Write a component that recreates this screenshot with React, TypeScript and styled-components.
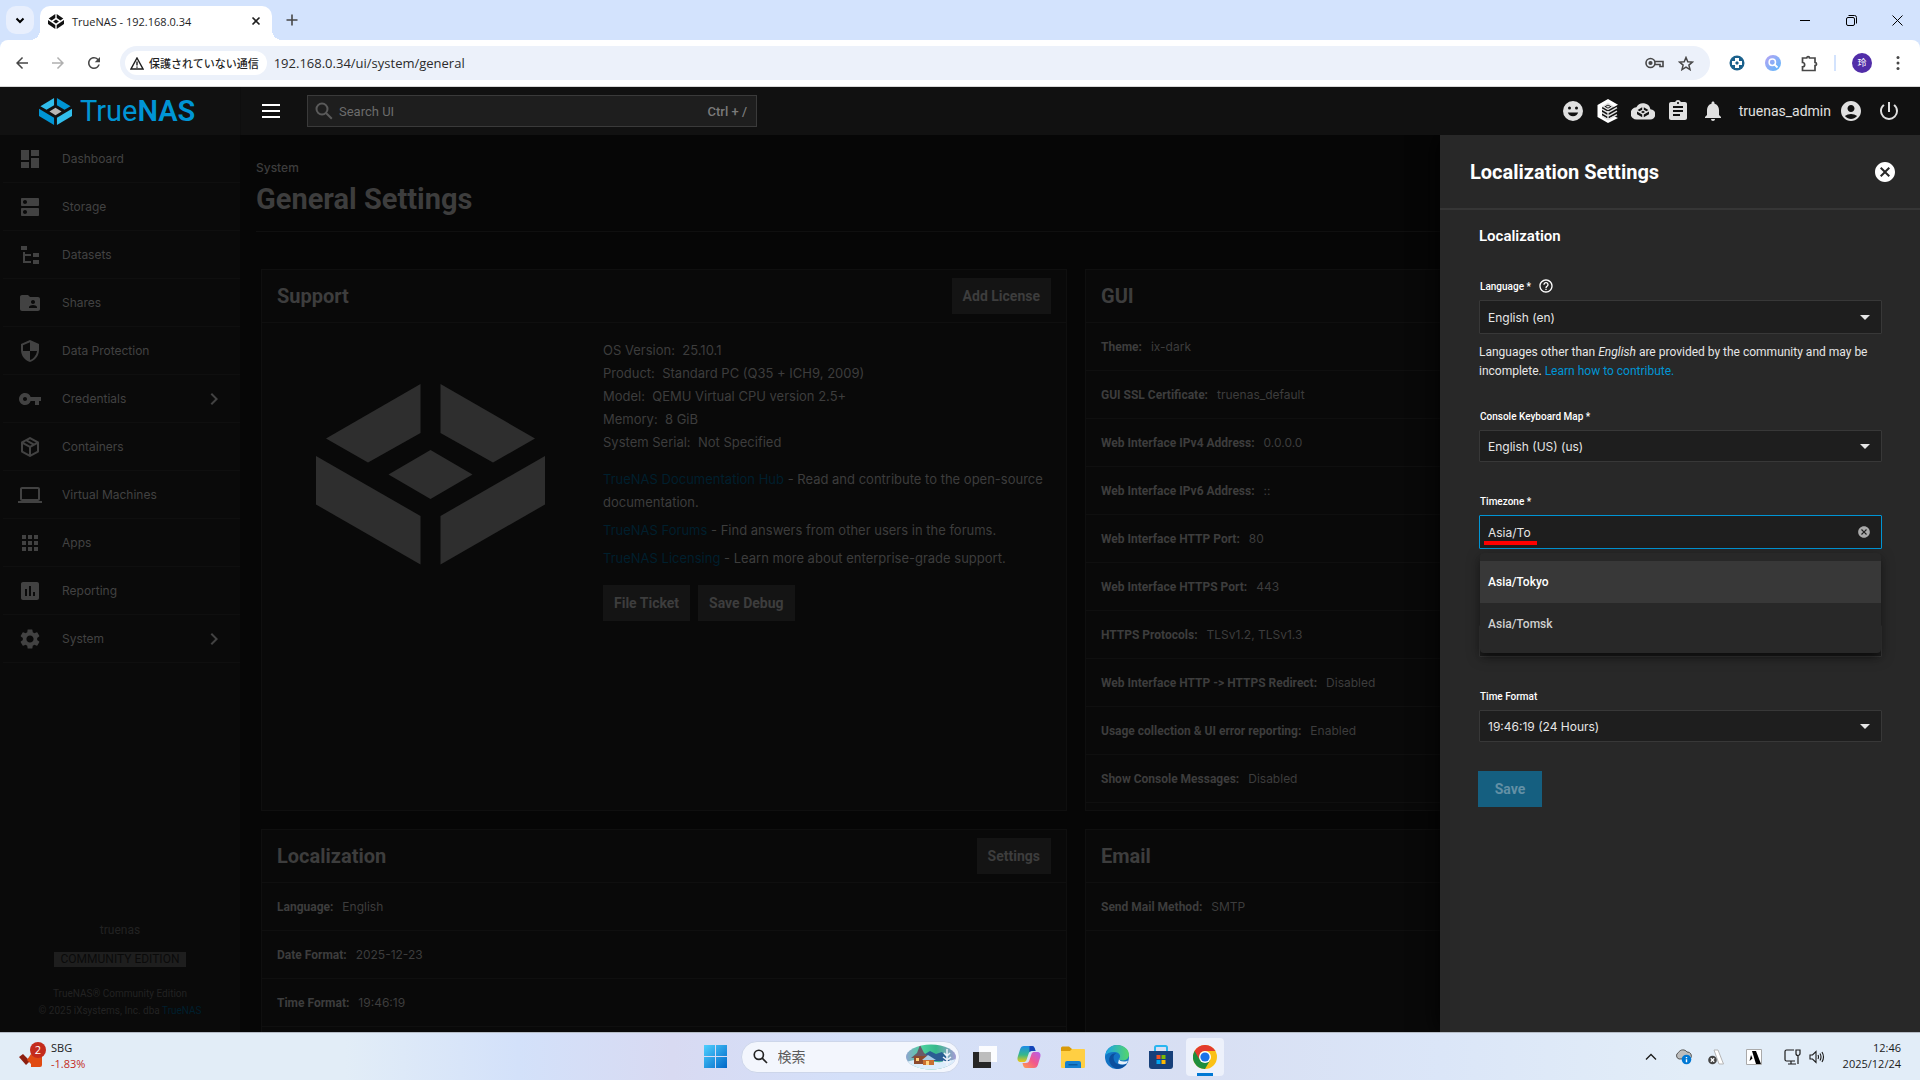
import React from "react";
import styled, { createGlobalStyle, css } from "styled-components";
import {
  MdAccountCircle,
  MdApps,
  MdArrowBack,
  MdArrowDropDown,
  MdArrowForward,
  MdAssessment,
  MdAssignment,
  MdCancel,
  MdChevronRight,
  MdDashboard,
  MdDns,
  MdFolderShared,
  MdHelpOutline,
  MdLaptop,
  MdNotifications,
  MdPowerSettingsNew,
  MdRefresh,
  MdSecurity,
  MdSettings,
  MdVpnKey,
} from "react-icons/md";

const fonts = {
  ui: `Inter, Roboto, "Liberation Sans", sans-serif`,
  plain: `Roboto, "Liberation Sans", sans-serif`,
  system: `"Open Sans", "Noto Sans", "Noto Sans CJK JP", sans-serif`,
};

const colors = {
  blue: "#0095d5",
  bar: "#111111",
  icon: "#e0e0e0",
  side: "#0a0a0a",
  main: "#060606",
  card: "#090909",
  line: "#0f0f0f",
  dim: "#3d3d3d",
  panel: "#282828",
  field: "#1e1e1e",
  fieldLine: "#383838",
};

const GlobalStyle = createGlobalStyle`
  *, *::before, *::after { box-sizing: border-box; }
  body { margin: 0; background: ${colors.main}; font-family: ${fonts.ui}; }
  button, input, select { font: inherit; color: inherit; margin: 0; }
  button { border: 0; padding: 0; background: none; cursor: pointer; }
  h1, h2, h3, p, ul, dl, dd { margin: 0; padding: 0; }
  ul { list-style: none; }
  a { color: inherit; text-decoration: none; }
  svg { display: block; flex: none; }
`;

const Screen = styled.div`
  display: flex;
  flex-direction: column;
  height: 100vh;
  overflow: hidden;
`;

/* ---------- browser ---------- */

const TabStrip = styled.div`
  display: flex;
  align-items: center;
  height: 40px;
  flex: none;
  padding-left: 6px;
  background: #d3e3fd;
  font-family: ${fonts.system};
`;

const TabSearch = styled.button`
  display: grid;
  place-items: center;
  width: 28px;
  height: 28px;
  border-radius: 10px;
  background: #e8effd;
`;

const Tab = styled.div`
  position: relative;
  display: flex;
  align-items: center;
  align-self: flex-end;
  gap: 8px;
  width: 232px;
  height: 34px;
  margin-left: 6px;
  padding: 0 11px 4px 8px;
  border-radius: 10px 10px 0 0;
  background: #fff;
  color: #1f1f1f;

  &::before,
  &::after {
    content: "";
    position: absolute;
    bottom: 0;
    width: 10px;
    height: 10px;
  }
  &::before {
    right: 100%;
    background: radial-gradient(circle at 0 0, transparent 10px, #fff 10px);
  }
  &::after {
    left: 100%;
    background: radial-gradient(circle at 100% 0, transparent 10px, #fff 10px);
  }
`;

const TabTitle = styled.span`
  flex: 1;
  font-size: 11px;
  white-space: nowrap;
`;

const NewTab = styled.button`
  margin-left: 14px;
`;

const WindowButtons = styled.div`
  display: flex;
  margin-left: auto;
`;

const WindowButton = styled.button`
  display: grid;
  place-items: center;
  width: 46px;
  height: 40px;
`;

const Toolbar = styled.div`
  display: flex;
  align-items: center;
  flex: none;
  height: 47px;
  padding: 0 16px 0 12px;
  background: #fff;
  border-bottom: 1px solid #d8d8d8;
  border-radius: 8px 8px 0 0;
  font-family: ${fonts.system};
  color: #474747;
`;

const ToolbarBack = styled.div`
  flex: none;
  background: linear-gradient(#d3e3fd 50%, #fff 50%);
`;

const NavButton = styled.button<{ $muted?: boolean }>`
  display: grid;
  place-items: center;
  width: 20px;
  height: 32px;
  margin-right: 16px;
  color: ${(p) => (p.$muted ? "#b0b0b0" : "#474747")};
`;

const Omnibox = styled.div`
  display: flex;
  align-items: center;
  flex: 1;
  height: 34px;
  padding: 0 16px 0 5px;
  border-radius: 17px;
  background: #ecf1fa;
`;

const SecurityChip = styled.button`
  display: flex;
  align-items: center;
  gap: 5px;
  height: 24px;
  padding: 0 8px 0 5px;
  border-radius: 12px;
  background: #fff;
  color: #1f1f1f;
  font-size: 11px;
  font-weight: 500;
  font-family: "Noto Sans CJK JP", sans-serif;
  line-height: 24px;
`;

const Address = styled.input`
  flex: 1;
  min-width: 0;
  margin-left: 7px;
  padding: 0;
  border: 0;
  outline: 0;
  background: none;
  color: #2b2b2b;
  font-size: 13px;
`;

const OmniActions = styled.div`
  display: flex;
  align-items: center;
  gap: 14px;
`;

const Extensions = styled.div`
  display: flex;
  align-items: center;
  gap: 20px;
  margin-left: 19px;
`;

const Divider = styled.span`
  width: 2px;
  height: 16px;
  margin: 0 -4px;
  background: #d3e3fd;
`;

const Avatar = styled.button`
  width: 20px;
  height: 20px;
  border-radius: 50%;
  background: #512da8;
  color: #fff;
  font-size: 9px;
  line-height: 20px;
  font-family: "Noto Sans CJK JP", sans-serif;
`;

/* ---------- application header ---------- */

const AppBar = styled.header`
  display: flex;
  align-items: center;
  flex: none;
  height: 48px;
  background: ${colors.bar};
  color: ${colors.icon};
`;

const Brand = styled.a`
  display: flex;
  align-items: center;
  gap: 8px;
  width: 241px;
  height: 100%;
  padding-left: 39px;
  border-right: 1px solid #0e0e0e;
  color: ${colors.blue};
  font-family: ${fonts.plain};
  font-size: 29px;
  line-height: 48px;
`;

const BrandBold = styled.b`
  font-weight: 600;
`;

const MenuButton = styled.button`
  display: grid;
  gap: 4px;
  width: 18px;
  margin-left: 21px;

  span {
    height: 2px;
    background: #fff;
  }
`;

const SearchBox = styled.label`
  display: flex;
  align-items: center;
  gap: 6px;
  width: 450px;
  height: 32px;
  margin-left: 27px;
  padding: 0 9px 0 7px;
  border: 1px solid #3a3a3a;
  background: #1e1e1e;
  color: #7a7a7a;
  font-family: ${fonts.plain};
  font-size: 13px;

  input {
    flex: 1;
    min-width: 0;
    padding: 0;
    border: 0;
    outline: 0;
    background: none;
  }
  input::placeholder {
    color: #6c6c6c;
  }
  kbd {
    font: 500 13px ${fonts.plain};
  }
`;

const HeaderActions = styled.div`
  display: flex;
  align-items: center;
  gap: 11px;
  margin-left: auto;
  padding-right: 19px;
  font-family: ${fonts.plain};
`;

const IconButton = styled.button`
  display: grid;
  place-items: center;
  width: 24px;
  height: 24px;
`;

const UserButton = styled.button`
  display: flex;
  align-items: center;
  gap: 8px;
  margin: 0 3px;
  font-size: 14px;
`;

/* ---------- body ---------- */

const Body = styled.div`
  position: relative;
  display: flex;
  flex: 1;
  min-height: 0;
  overflow: hidden;
`;

const Sidebar = styled.nav`
  display: flex;
  flex-direction: column;
  flex: none;
  width: 240px;
  background: ${colors.side};
  color: #424242;
`;

const NavItem = styled.a`
  display: flex;
  align-items: center;
  height: 48px;
  margin-left: 3px;
  padding: 0 14px 0 15px;
  border-bottom: 1px solid #0f0f0f;
  font-size: 12px;

  > svg:first-child {
    width: 24px;
    height: 24px;
    margin-right: 20px;
  }
  span {
    flex: 1;
  }
`;

const SideFooter = styled.div`
  display: flex;
  flex-direction: column;
  align-items: center;
  margin-top: auto;
  padding-bottom: 13px;
  color: #222;
  font-family: ${fonts.plain};
  font-size: 10px;
  line-height: 17px;
`;

const HostName = styled.p`
  margin-bottom: 14px;
  font-size: 12px;
  line-height: 16px;
`;

const Edition = styled.span`
  margin-bottom: 18px;
  padding: 0 7px;
  background: #1e1e1e;
  color: #0a0a0a;
  font-size: 12px;
  line-height: 15px;
`;

const DarkLink = styled.a`
  color: #001f2d;
`;

const Main = styled.main`
  flex: 1;
  min-width: 0;
  padding: 25px 16px 0;
  background: ${colors.main};
  color: ${colors.dim};
  overflow: hidden;
`;

const Crumb = styled.a`
  display: block;
  font-size: 12px;
  font-weight: 500;
  line-height: 16px;
`;

const PageTitle = styled.h1`
  padding: 3px 0 12px;
  border-bottom: 1px solid ${colors.line};
  font-family: ${fonts.plain};
  font-size: 29px;
  font-weight: 700;
  line-height: 40px;
`;

const Grid = styled.div`
  display: grid;
  grid-template-columns: 1fr 1fr;
  gap: 18px;
  padding: 37px 13px 0 5px;
`;

const Card = styled.section`
  min-height: 260px;
  padding-bottom: 7px;
  background: ${colors.card};
  border: 1px solid ${colors.line};
`;

const CardHeader = styled.header`
  display: flex;
  align-items: center;
  justify-content: space-between;
  height: 53px;
  padding: 0 15px;
  border-bottom: 1px solid ${colors.line};
`;

const CardTitle = styled.h2`
  font-family: ${fonts.plain};
  font-size: 20px;
  font-weight: 700;
`;

const DimButton = styled.button`
  height: 36px;
  padding: 0 11px;
  background: #141414;
  color: ${colors.dim};
  font-family: ${fonts.plain};
  font-size: 14px;
  font-weight: 700;
`;

const Item = styled.div`
  display: flex;
  align-items: center;
  gap: 9px;
  height: 48px;
  padding: 0 15px;
  border-bottom: 1px solid ${colors.line};
  font-size: 12px;
  line-height: 16px;

  dt {
    font-family: ${fonts.plain};
    font-weight: 700;
  }
`;

const SupportBody = styled.div`
  display: grid;
  grid-template-columns: 341px 1fr;
  padding: 16px 8px 0 0;
  font-family: ${fonts.ui};
  font-size: 13px;
  line-height: 23px;

  > svg {
    margin: 45px 0 0 54px;
  }
`;

const Links = styled.ul`
  display: grid;
  gap: 5px;
  padding: 14px 0 15px;
`;

const ButtonRow = styled.div`
  display: flex;
  gap: 8px;
`;

/* ---------- slide-in form ---------- */

const Drawer = styled.aside`
  position: absolute;
  top: 0;
  right: 0;
  bottom: 0;
  width: 480px;
  background: ${colors.panel};
  color: #fff;
  box-shadow: 0 0 24px #000;
`;

const DrawerHeader = styled.header`
  display: flex;
  align-items: center;
  justify-content: space-between;
  height: 75px;
  padding: 0 23px 0 30px;
  border-bottom: 2px solid #363636;
`;

const DrawerTitle = styled.h2`
  font-family: ${fonts.plain};
  font-size: 20px;
  font-weight: 700;
`;

const Form = styled.form`
  padding: 14px 38px 0 39px;
`;

const FormTitle = styled.h3`
  margin-bottom: 30px;
  font-family: ${fonts.plain};
  font-size: 15px;
  font-weight: 600;
  line-height: 24px;
`;

const Field = styled.div<{ $gap?: number }>`
  position: relative;
  margin-bottom: ${(p) => p.$gap ?? 31}px;
`;

const FieldLabel = styled.div`
  display: flex;
  align-items: center;
  gap: 7px;
  height: 16px;
  margin: 0 1px 6px;
  font-family: ${fonts.plain};
  font-size: 10px;
  font-weight: 500;
`;

const Control = styled.div<{ $active?: boolean; $tall?: boolean }>`
  display: grid;
  align-items: center;
  height: ${(p) => (p.$tall ? 34 : 32)}px;
  border: 1px solid ${(p) => (p.$active ? colors.blue : colors.fieldLine)};
  border-radius: 1px;
  background: ${colors.field};
  color: #e6e6e6;
  font-size: 12px;

  > * {
    grid-area: 1 / 1;
  }
  > svg {
    justify-self: end;
    margin-right: 4px;
    pointer-events: none;
  }
  > button {
    justify-self: end;
    margin-right: 10px;
    color: #aaa;
  }
`;

const fieldText = css`
  width: 100%;
  height: 100%;
  padding: 0 8px;
  border: 0;
  outline: 0;
  background: none;
  appearance: none;
`;

const Select = styled.select`
  ${fieldText}
`;

const TextInput = styled.input`
  ${fieldText}
`;

const Underline = styled.span`
  align-self: end;
  width: 53px;
  height: 4px;
  margin: 0 0 3px 4px;
  background: #f00;
`;

const Hint = styled.p`
  margin-top: 9px;
  color: #e6e6e6;
  font-family: ${fonts.plain};
  font-size: 12px;
  line-height: 19px;

  a {
    color: ${colors.blue};
  }
`;

const Options = styled.ul`
  position: absolute;
  z-index: 1;
  top: 60px;
  left: 1px;
  right: 1px;
  padding: 8px 0;
  border-radius: 4px;
  background: ${colors.panel};
  box-shadow: 0 5px 6px -2px rgba(0, 0, 0, 0.4), 0 4px 14px rgba(0, 0, 0, 0.35);
`;

const Option = styled.li<{ $active?: boolean }>`
  padding: 0 8px;
  background: ${(p) => (p.$active ? "#383838" : "transparent")};
  color: ${(p) => (p.$active ? "#fff" : "#d0d0d0")};
  font-family: ${fonts.plain};
  font-size: 12px;
  font-weight: 500;
  line-height: 42px;
`;

const Save = styled.button`
  width: 64px;
  height: 36px;
  margin-left: -1px;
  background: #155f80;
  color: #6390a5;
  font-family: ${fonts.plain};
  font-size: 14px;
  font-weight: 700;
`;

/* ---------- taskbar ---------- */

const Taskbar = styled.footer`
  display: grid;
  grid-template-columns: 1fr auto 1fr;
  align-items: center;
  flex: none;
  height: 48px;
  border-top: 1px solid #b5bcc6;
  background: linear-gradient(90deg, #e2edf7 0 18%, #d3e1fa 27%, #d8daf2 35%, #d4e0f9 44%, #d8dff3 62%, #dbe6f8 75%, #e2edf8 88%);
  color: #1b1b1b;
  font-family: ${fonts.system};
`;

const Stock = styled.button`
  display: flex;
  align-items: center;
  gap: 5px;
  justify-self: start;
  padding: 0 0 2px 19px;
  text-align: left;
  font-size: 11px;
  line-height: 16px;
`;

const Loss = styled.span`
  display: block;
  color: #c42b1c;
`;

const Pinned = styled.div`
  display: flex;
  align-items: center;
`;

const PinnedApp = styled.button<{ $active?: boolean }>`
  display: grid;
  place-items: center;
  width: 38px;
  height: 38px;
  margin: 0 3px;
  border-radius: 4px;
  ${(p) =>
    p.$active &&
    css`
      background: linear-gradient(#0078d4, #0078d4) center bottom / 16px 3px no-repeat #edf1fb;
    `}
`;

const TaskSearch = styled.label`
  display: flex;
  align-items: center;
  gap: 10px;
  width: 219px;
  height: 32px;
  margin: 0 3px;
  padding: 0 3px 0 11px;
  border: 1px solid #cdd6ea;
  border-radius: 16px;
  background: #f3f6fd;

  input {
    flex: 1;
    min-width: 0;
    padding: 0 0 2px;
    border: 0;
    outline: 0;
    background: none;
    font: 14px "Noto Sans CJK JP", sans-serif;
  }
  input::placeholder {
    color: #5c5c5c;
  }
`;

const Tray = styled.div`
  display: flex;
  align-items: center;
  justify-self: end;
  padding-right: 19px;
`;

const TrayIcon = styled.button<{ $space?: number }>`
  margin-right: ${(p) => p.$space ?? 16}px;
`;

const Clock = styled.time`
  padding-bottom: 2px;
  text-align: right;
  font-size: 11px;
  line-height: 16px;
`;

/* ---------- drawings ---------- */

const CUBE = [
  "M104.5 0V49L52 78.5 10 54.5z",
  "M124.5 0V49L177 78.5 219 54.5z",
  "M0 72 104.5 132V180.500L0 120.500z",
  "M229 72 124.5 132V180.500L229 120.500z",
  "M114.5 66 156.500 90.500 114.500 115 72.500 90.500z",
];

function Cube({ width, height, fills }: { width: number; height: number; fills: string[] }) {
  return (
    <svg width={width} height={height} viewBox="0 0 229 181" preserveAspectRatio="none" aria-hidden="true">
      {CUBE.map((d, i) => (
        <path key={d} d={d} fill={fills[i % fills.length]} />
      ))}
    </svg>
  );
}

const DatasetsIcon = () => (
  <svg viewBox="0 0 24 24" fill="currentColor">
    <path d="M3 3h6v4H3zM15 10h6v4h-6zM15 17h6v4h-6zM5 9h2v2h6v2H7v5h6v2H5z" />
  </svg>
);

const PackageIcon = () => (
  <svg viewBox="0 0 24 24" fill="currentColor">
    <path d="M21,16.5C21,16.88 20.79,17.21 20.47,17.38L12.57,21.82C12.41,21.94 12.21,22 12,22C11.79,22 11.59,21.94 11.43,21.82L3.53,17.38C3.21,17.21 3,16.88 3,16.5V7.5C3,7.12 3.21,6.79 3.53,6.62L11.43,2.18C11.59,2.06 11.79,2 12,2C12.21,2 12.41,2.06 12.57,2.18L20.47,6.62C20.79,6.79 21,7.12 21,7.5V16.5M12,4.15L10.11,5.22L16,8.61L17.96,7.5L12,4.15M6.04,7.5L12,10.85L13.96,9.75L8.08,6.35L6.04,7.5M5,15.91L11,19.29V12.58L5,9.21V15.91M19,15.91V9.21L13,12.58V19.29L19,15.91Z" />
  </svg>
);

const SmileIcon = () => (
  <svg width="24" height="24" viewBox="0 0 24 24" fill="currentColor" fillRule="evenodd">
    <path d="M12 2a10 10 0 1 0 0 20 10 10 0 0 0 0-20zM8.500 7.500a1.500 1.500 0 1 1 0 3 1.500 1.500 0 0 1 0-3zM15.500 7.500a1.500 1.500 0 1 1 0 3 1.500 1.500 0 0 1 0-3zM6.800 13.500h10.400a5.500 5.500 0 0 1-10.400 0z" />
  </svg>
);

const ConnectIcon = () => (
  <svg width="22" height="24" viewBox="0 0 22 24" aria-hidden="true">
    <path d="M11 0 21 5.800 16.500 8.300 11 5.200 5 8.600V16.500L11 20 16.500 17 21 19 11 24 .5 18V6z" fill="#fff" />
    <path d="M11 4.600 16 7.600 11 10.400 6 7.600z" fill="none" stroke="#e0e0e0" strokeWidth="1.300" />
    <path d="M11 6.500 13 7.600 11 8.800 9 7.600z" fill="#e0e0e0" />
    <path d="M5 10.200 11 13.700 20 8.700M5 13.700 11 17.200 20 12.200M5 17.200 11 20.700 20 15.700M11 12v9" fill="none" stroke="#e0e0e0" strokeWidth="1.400" />
  </svg>
);

const CloudIcon = () => (
  <svg width="24" height="17" viewBox="0 0 24 17" aria-hidden="true">
    <path d="M19.400 6.200A7.500 7.500 0 0 0 5.400 4.300 6 6 0 0 0 6 16.500h13a5 5 0 0 0 .4-10.300z" fill="#e0e0e0" />
    <path d="M11.200 4.200v2.500L8.500 8.200 6.600 7zM12.800 4.200v2.500l2.700 1.500L17.400 7zM6 8.500l5.200 3v2.800L6 11.200zM18 8.500l-5.200 3v2.800l5.200-3.100zM12 7.800l2 1.200-2 1.200L10 9z" fill="#111" />
  </svg>
);

const SearchGlyph = ({ size, color, width = 2 }: { size: number; color: string; width?: number }) => (
  <svg width={size} height={size} viewBox="0 0 18 18" fill="none" stroke={color} strokeWidth={width} aria-hidden="true">
    <circle cx="7" cy="7" r="5.500" />
    <path d="M11 11l5.800 5.800" />
  </svg>
);

const StockIcon = () => (
  <svg width="27" height="28" viewBox="0 0 27 28" aria-hidden="true">
    <path d="M0 15l4-3 5 5 5-5v4l-7 7z" fill="#8d1f10" />
    <path d="M12 12l11 2v9a2 2 0 0 1-2 2h-9v-3l-4-4z" fill="#e04a12" />
    <circle cx="19" cy="8" r="8" fill="#c42b1c" />
    <text x="19" y="12" fontSize="11" fontFamily="Open Sans, sans-serif" textAnchor="middle" fill="#fff">2</text>
  </svg>
);

const WindowsIcon = () => (
  <svg width="23" height="23" viewBox="0 0 23 23" aria-hidden="true">
    <defs>
      <linearGradient id="win" x1="0" y1="0" x2="1" y2="1">
        <stop offset="0" stopColor="#4fd0ff" />
        <stop offset="1" stopColor="#0067c8" />
      </linearGradient>
    </defs>
    <path d="M0 0h11v11H0zM12 0h11v11H12zM0 12h11v11H0zM12 12h11v11H12z" fill="url(#win)" />
  </svg>
);

const WinterScene = () => (
  <svg width="50" height="26" viewBox="0 0 50 26" aria-hidden="true">
    <defs>
      <linearGradient id="sky" x1="0" x2="1">
        <stop offset="0" stopColor="#8fa3cf" />
        <stop offset=".3" stopColor="#4ed3a0" />
        <stop offset=".6" stopColor="#37b98b" />
        <stop offset="1" stopColor="#a49bd4" />
      </linearGradient>
      <clipPath id="scene"><ellipse cx="25" cy="13" rx="25" ry="12.500" /></clipPath>
    </defs>
    <g clipPath="url(#scene)">
      <path d="M0 0h50v26H0z" fill="url(#sky)" />
      <path d="M16 12l8-5 6 3 6-2 8 9H16z" fill="#2b5d93" />
      <path d="M0 18q12-4 24-1t26-2v11H0z" fill="#dcedfb" />
      <path d="M14 1l4 8 7 5H5l6-5z" fill="#6b5a68" />
      <path d="M8 12h14v8H8z" fill="#8c4a2e" />
      <path d="M17 15h11v6H17z" fill="#c9702f" />
      <path d="M20 17h3v4h-3zM10 14h3v3h-3z" fill="#ffd37a" />
      <path d="M16 16l6-5 8 5z" fill="#a9cbe6" />
      <path d="M41 5v17M38 9l3 3 3-3M37 13l4 3 4-3M37 17l4 2 4-2" fill="none" stroke="#eef2fb" strokeWidth="1.500" />
    </g>
  </svg>
);

const TaskViewIcon = () => (
  <svg width="24" height="22" viewBox="0 0 24 22" aria-hidden="true">
    <path d="M0 6h18v16H0z" fill="#262626" />
    <path d="M6 0h18v16H6z" fill="#fff" fillOpacity=".9" />
    <path d="M6 6h12v10H6z" fill="#bdbdbd" />
  </svg>
);

const CopilotIcon = () => (
  <svg width="24" height="22" viewBox="0 0 24 22" aria-hidden="true">
    <defs>
      <linearGradient id="cpa" x1="0" y1="0" x2="0" y2="1">
        <stop offset="0" stopColor="#1c8ce8" />
        <stop offset=".55" stopColor="#35b88c" />
        <stop offset="1" stopColor="#f2c811" />
      </linearGradient>
      <linearGradient id="cpb" x1="1" y1="0" x2="0" y2="1">
        <stop offset="0" stopColor="#b25ff0" />
        <stop offset=".5" stopColor="#f2588c" />
        <stop offset="1" stopColor="#ff9d4d" />
      </linearGradient>
    </defs>
    <path d="M7 0h8c2 0 3 2 3.500 5H15c-2 0-3 1-3.500 3l-2 6c-.6 1.600-1.500 2-3 2H4c-3 0-4-2-3.300-5L3 3.500C3.700 1 5 0 7 0z" fill="url(#cpa)" />
    <path d="M12.500 0H15c2 0 3 2 3.500 5H15c-1 0-2 .5-2.600 1.300z" fill="#1544b8" />
    <path d="M17 22H9c-2 0-3-2-3.500-5H9c2 0 3-1 3.500-3l2-6c.6-1.600 1.500-2 3-2H20c3 0 4 2 3.300 5L21 18.500C20.300 21 19 22 17 22z" fill="url(#cpb)" />
  </svg>
);

const ExplorerIcon = () => (
  <svg width="24" height="22" viewBox="0 0 24 22" aria-hidden="true">
    <path d="M0 2a1.500 1.500 0 0 1 1.500-1.500H8L11 3v5H0z" fill="#d99a08" />
    <path d="M1 5h8l2-2h12a1 1 0 0 1 1 1v17a1 1 0 0 1-1 1H1a1 1 0 0 1-1-1V5z" fill="#ffcf43" />
    <path d="M4 22v-5a2 2 0 0 1 2-2h12a2 2 0 0 1 2 2v5z" fill="#1580d0" />
    <path d="M7.500 18h9v1.500h-9z" fill="#0b5aa0" />
  </svg>
);

const EdgeIcon = () => (
  <svg width="24" height="24" viewBox="0 0 24 24" aria-hidden="true">
    <defs>
      <linearGradient id="edge" x1="0" x2="1">
        <stop offset="0" stopColor="#1aa3e8" />
        <stop offset="1" stopColor="#55d66a" />
      </linearGradient>
    </defs>
    <circle cx="12" cy="12" r="12" fill="#1273c4" />
    <path d="M.2 11C1 4.500 6 0 12 0c7 0 12 4.500 12 9.800 0 3.500-2.600 5.700-6 5.700-2.500 0-3.800-.9-3.800-1.700 0-.6.900-.9.900-2.500C15.100 8.500 12 7 9 7 5 7 1.500 8.500.2 11z" fill="url(#edge)" />
    <path d="M8.500 12.500c0-2 1.200-3.500 3-4.200C7 7.800 3.500 11.500 4.300 16c.9 4.500 4.700 7.800 9 7.800 3.500-.3 6.500-2.200 8.500-5-3 1.500-6.500 1.500-9.300.2-2.400-1.200-4-3.600-4-6.500z" fill="#0b4f9e" />
    <path d="M14 14c0 1 1.500 2.500 5 2.600 1.800 0 3-.3 4-1-.4 1.200-.8 2-1.400 3-3 1.200-6 1.200-8.600-.3z" fill="#e6f0fb" />
  </svg>
);

const StoreIcon = () => (
  <svg width="24" height="24" viewBox="0 0 24 24" aria-hidden="true">
    <path d="M6 7V2.500A1.500 1.500 0 0 1 7.500 1h9A1.500 1.500 0 0 1 18 2.500V7" fill="none" stroke="#29b6f0" strokeWidth="2" />
    <path d="M0 6h24v15a3 3 0 0 1-3 3H3a3 3 0 0 1-3-3z" fill="#17407a" />
    <path d="M7.500 10h4v4h-4z" fill="#f25022" />
    <path d="M12.500 10h4v4h-4z" fill="#7fba00" />
    <path d="M7.500 15h4v4h-4z" fill="#00a4ef" />
    <path d="M12.500 15h4v4h-4z" fill="#ffb900" />
  </svg>
);

const ChromeIcon = () => (
  <svg width="24" height="24" viewBox="0 0 24 24" aria-hidden="true">
    <circle cx="12" cy="12" r="12" fill="#fbc116" />
    <path d="M12 12 1.600 6A12 12 0 0 0 12 24l5.200-9z" fill="#1e8e3e" />
    <path d="M12 6h10.400A12 12 0 0 0 1.600 6l5.200 9A6 6 0 0 1 12 6z" fill="#e33b2e" />
    <circle cx="12" cy="12" r="6" fill="#fff" />
    <circle cx="12" cy="12" r="4.600" fill="#1a73e8" />
  </svg>
);

const lineIcon = { fill: "none", stroke: "currentColor", "aria-hidden": true } as const;

/* ---------- data ---------- */

const navItems: { label: string; icon: React.ReactNode; more?: boolean }[] = [
  { label: "Dashboard", icon: <MdDashboard /> },
  { label: "Storage", icon: <MdDns /> },
  { label: "Datasets", icon: <DatasetsIcon /> },
  { label: "Shares", icon: <MdFolderShared /> },
  { label: "Data Protection", icon: <MdSecurity /> },
  { label: "Credentials", icon: <MdVpnKey />, more: true },
  { label: "Containers", icon: <PackageIcon /> },
  { label: "Virtual Machines", icon: <MdLaptop /> },
  { label: "Apps", icon: <MdApps /> },
  { label: "Reporting", icon: <MdAssessment /> },
  { label: "System", icon: <MdSettings />, more: true },
];

const support = [
  ["OS Version:", "25.10.1"],
  ["Product:", "Standard PC (Q35 + ICH9, 2009)"],
  ["Model:", "QEMU Virtual CPU version 2.5+"],
  ["Memory:", "8 GiB"],
  ["System Serial:", "Not Specified"],
];

const gui = [
  ["Theme:", "ix-dark"],
  ["GUI SSL Certificate:", "truenas_default"],
  ["Web Interface IPv4 Address:", "0.0.0.0"],
  ["Web Interface IPv6 Address:", "::"],
  ["Web Interface HTTP Port:", "80"],
  ["Web Interface HTTPS Port:", "443"],
  ["HTTPS Protocols:", "TLSv1.2, TLSv1.3"],
  ["Web Interface HTTP -> HTTPS Redirect:", "Disabled"],
  ["Usage collection & UI error reporting:", "Enabled"],
  ["Show Console Messages:", "Disabled"],
];

const localization = [
  ["Language:", "English"],
  ["Date Format:", "2025-12-23"],
  ["Time Format:", "19:46:19"],
];

function Items({ rows }: { rows: string[][] }) {
  return (
    <dl>
      {rows.map(([name, value]) => (
        <Item key={name}>
          <dt>{name}</dt>
          <dd>{value}</dd>
        </Item>
      ))}
    </dl>
  );
}

function SelectField({ id, label, value, help, tall, gap, children }: {
  id: string;
  label: string;
  value: string;
  help?: boolean;
  tall?: boolean;
  gap?: number;
  children?: React.ReactNode;
}) {
  return (
    <Field $gap={gap}>
      <FieldLabel>
        <label htmlFor={id}>{label}</label>
        {help && <MdHelpOutline size={16} />}
      </FieldLabel>
      <Control $tall={tall}>
        <Select id={id} defaultValue={value}>
          <option>{value}</option>
        </Select>
        <MdArrowDropDown size={24} />
      </Control>
      {children}
    </Field>
  );
}

/* ---------- page ---------- */

export default function App() {
  return (
    <Screen>
      <GlobalStyle />
      <TabStrip>
        <TabSearch aria-label="Search tabs">
          <svg width="10" height="10" viewBox="0 0 10 10" {...lineIcon} strokeWidth="2"><path d="M1.500 3.500 5 7l3.500-3.500" /></svg>
        </TabSearch>
        <Tab>
          <Cube width={16} height={15} fills={["#111"]} />
          <TabTitle>TrueNAS - 192.168.0.34</TabTitle>
          <button aria-label="Close tab">
            <svg width="10" height="10" viewBox="0 0 10 10" {...lineIcon} strokeWidth="1.600"><path d="M1.500 1.500l7 7M8.500 1.500l-7 7" /></svg>
          </button>
        </Tab>
        <NewTab aria-label="New tab">
          <svg width="12" height="12" viewBox="0 0 12 12" {...lineIcon} stroke="#474747" strokeWidth="1.600"><path d="M6 .5v11M.5 6h11" /></svg>
        </NewTab>
        <WindowButtons>
          <WindowButton aria-label="Minimize">
            <svg width="10" height="10" viewBox="0 0 10 10" {...lineIcon}><path d="M0 5.500h10" /></svg>
          </WindowButton>
          <WindowButton aria-label="Restore">
            <svg width="11" height="11" viewBox="0 0 11 11" {...lineIcon}><rect x=".5" y="2.500" width="8" height="8" rx="1.500" /><path d="M2.500.5H8.500a2 2 0 0 1 2 2V8.500" /></svg>
          </WindowButton>
          <WindowButton aria-label="Close">
            <svg width="11" height="11" viewBox="0 0 11 11" {...lineIcon}><path d="M.5.5l10 10M10.500.5l-10 10" /></svg>
          </WindowButton>
        </WindowButtons>
      </TabStrip>
      <ToolbarBack>
        <Toolbar>
          <NavButton aria-label="Back"><MdArrowBack size={18} /></NavButton>
          <NavButton aria-label="Forward" $muted><MdArrowForward size={18} /></NavButton>
          <NavButton aria-label="Reload"><MdRefresh size={18} /></NavButton>
          <Omnibox>
            <SecurityChip>
              <svg width="14" height="13" viewBox="0 0 14 13" {...lineIcon} strokeWidth="1.400"><path d="M7 1 13 12H1zM7 4.500v4M7 9.500v1.300" /></svg>
              保護されていない通信
            </SecurityChip>
            <Address aria-label="Address" defaultValue="192.168.0.34/ui/system/general" />
            <OmniActions>
              <button aria-label="Passwords">
                <svg width="19" height="12" viewBox="0 0 19 12" {...lineIcon} strokeWidth="1.600"><circle cx="5.500" cy="6" r="4.500" /><circle cx="5.500" cy="6" r="1.300" fill="currentColor" /><path d="M10 4.500h8v5h-3v-2h-5" /></svg>
              </button>
              <button aria-label="Bookmark">
                <svg width="16" height="15" viewBox="0 0 16 15" {...lineIcon} strokeWidth="1.500"><path d="M8 1.500l1.800 4.200 4.600.4-3.500 3 1.100 4.500L8 11.200l-4 2.400 1.100-4.500-3.500-3 4.600-.4z" /></svg>
              </button>
            </OmniActions>
          </Omnibox>
          <Extensions>
            <button aria-label="Extension">
              <svg width="16" height="16" viewBox="0 0 16 16"><circle cx="8" cy="8" r="7.500" fill="#1b618c" /><path d="M6 3h4v3h3v4h-3v3H6v-3H3V6h3z" fill="#fff" /><path d="M8 6l2 2-2 2-2-2z" fill="#1b618c" /></svg>
            </button>
            <button aria-label="Search extension">
              <svg width="16" height="16" viewBox="0 0 16 16"><defs><linearGradient id="lens" x1="0" y1="0" x2="1" y2="1"><stop stopColor="#b8a4f4" /><stop offset="1" stopColor="#5cb8fa" /></linearGradient></defs><circle cx="8" cy="8" r="8" fill="url(#lens)" /><circle cx="7.300" cy="7.200" r="3.200" fill="none" stroke="#fff" strokeWidth="1.500" /><path d="M9.500 9.500l3 3" stroke="#fff" strokeWidth="1.800" /></svg>
            </button>
            <button aria-label="Extensions">
              <svg width="17" height="17" viewBox="0 0 17 17" {...lineIcon} strokeWidth="1.700"><path d="M1.500 3h4.200a1.400 1.400 0 0 1 2.800 0H14v4.500a1.400 1.400 0 0 1 0 3V15.500H1.500v-3.700a2 2 0 0 0 0-4.300z" /></svg>
            </button>
            <Divider />
            <Avatar>玲</Avatar>
            <button aria-label="Menu">
              <svg width="12" height="16" viewBox="0 0 12 16" fill="#474747"><circle cx="6" cy="2.500" r="1.500" /><circle cx="6" cy="8" r="1.500" /><circle cx="6" cy="13.500" r="1.500" /></svg>
            </button>
          </Extensions>
        </Toolbar>
      </ToolbarBack>

      <AppBar>
        <Brand href="#dashboard">
          <Cube width={33} height={27} fills={["#31beec", "#0095d5", "#0095d5", "#31beec", "#b9b6b4"]} />
          <span>True<BrandBold>NAS</BrandBold></span>
        </Brand>
        <MenuButton aria-label="Toggle menu"><span /><span /><span /></MenuButton>
        <SearchBox>
          <SearchGlyph size={18} color="#5a5a5a" />
          <input aria-label="Search UI" placeholder="Search UI" />
          <kbd>Ctrl + /</kbd>
        </SearchBox>
        <HeaderActions>
          <IconButton aria-label="Feedback"><SmileIcon /></IconButton>
          <IconButton aria-label="TrueNAS Connect"><ConnectIcon /></IconButton>
          <IconButton aria-label="Cloud"><CloudIcon /></IconButton>
          <IconButton aria-label="Jobs"><MdAssignment size={24} /></IconButton>
          <IconButton aria-label="Alerts"><MdNotifications size={24} /></IconButton>
          <UserButton>truenas_admin<MdAccountCircle size={24} /></UserButton>
          <IconButton aria-label="Power"><MdPowerSettingsNew size={24} /></IconButton>
        </HeaderActions>
      </AppBar>

      <Body>
        <Sidebar>
          {navItems.map((item) => (
            <NavItem key={item.label} href={"#" + item.label}>
              {item.icon}
              <span>{item.label}</span>
              {item.more && <MdChevronRight size={24} />}
            </NavItem>
          ))}
          <SideFooter>
            <HostName>truenas</HostName>
            <Edition>COMMUNITY EDITION</Edition>
            <p>TrueNAS® Community Edition</p>
            <p>© 2025 iXsystems, Inc. dba <DarkLink href="#truenas">TrueNAS</DarkLink></p>
          </SideFooter>
        </Sidebar>

        <Main>
          <Crumb href="#system">System</Crumb>
          <PageTitle>General Settings</PageTitle>
          <Grid>
            <Card>
              <CardHeader>
                <CardTitle>Support</CardTitle>
                <DimButton>Add License</DimButton>
              </CardHeader>
              <SupportBody>
                <Cube width={229} height={181} fills={["#2e2e2e"]} />
                <div>
                  {support.map(([name, value]) => (
                    <p key={name}>{name}&nbsp; {value}</p>
                  ))}
                  <Links>
                    <li><DarkLink href="#docs">TrueNAS Documentation Hub</DarkLink> - Read and contribute to the open-source documentation.</li>
                    <li><DarkLink href="#forums">TrueNAS Forums</DarkLink> - Find answers from other users in the forums.</li>
                    <li><DarkLink href="#licensing">TrueNAS Licensing</DarkLink> - Learn more about enterprise-grade support.</li>
                  </Links>
                  <ButtonRow>
                    <DimButton>File Ticket</DimButton>
                    <DimButton>Save Debug</DimButton>
                  </ButtonRow>
                </div>
              </SupportBody>
            </Card>
            <Card>
              <CardHeader><CardTitle>GUI</CardTitle></CardHeader>
              <Items rows={gui} />
            </Card>
            <Card>
              <CardHeader>
                <CardTitle>Localization</CardTitle>
                <DimButton>Settings</DimButton>
              </CardHeader>
              <Items rows={localization} />
            </Card>
            <Card>
              <CardHeader><CardTitle>Email</CardTitle></CardHeader>
              <Items rows={[["Send Mail Method:", "SMTP"]]} />
            </Card>
          </Grid>
        </Main>

        <Drawer>
          <DrawerHeader>
            <DrawerTitle>Localization Settings</DrawerTitle>
            <IconButton aria-label="Close"><MdCancel size={24} /></IconButton>
          </DrawerHeader>
          <Form onSubmit={(e) => e.preventDefault()}>
            <FormTitle>Localization</FormTitle>
            <SelectField id="language" label="Language *" value="English (en)" help tall gap={27}>
              <Hint>
                Languages other than <em>English</em> are provided by the community and may be incomplete. <a href="#contribute">Learn how to contribute.</a>
              </Hint>
            </SelectField>
            <SelectField id="keyboard" label="Console Keyboard Map *" value="English (US) (us)" />
            <Field $gap={76}>
              <FieldLabel><label htmlFor="timezone">Timezone *</label></FieldLabel>
              <Control $active $tall>
                <TextInput id="timezone" defaultValue="Asia/To" />
                <Underline />
                <button type="button" aria-label="Clear"><MdCancel size={14} /></button>
              </Control>
              <Options role="listbox" aria-label="Timezone">
                <Option $active role="option" aria-selected="true">Asia/Tokyo</Option>
                <Option role="option" aria-selected="false">Asia/Tomsk</Option>
              </Options>
            </Field>
            <Field>
              <Control><Select aria-label="Date Format" /></Control>
            </Field>
            <SelectField id="time-format" label="Time Format" value="19:46:19 (24 Hours)" gap={29} />
            <Save>Save</Save>
          </Form>
        </Drawer>
      </Body>

      <Taskbar>
        <Stock>
          <StockIcon />
          <span>SBG<Loss>-1.83%</Loss></span>
        </Stock>
        <Pinned>
          <PinnedApp aria-label="Start"><WindowsIcon /></PinnedApp>
          <TaskSearch>
            <SearchGlyph size={15} color="#222" />
            <input aria-label="検索" placeholder="検索" />
            <WinterScene />
          </TaskSearch>
          <PinnedApp aria-label="Task view"><TaskViewIcon /></PinnedApp>
          <PinnedApp aria-label="Copilot"><CopilotIcon /></PinnedApp>
          <PinnedApp aria-label="Explorer"><ExplorerIcon /></PinnedApp>
          <PinnedApp aria-label="Edge"><EdgeIcon /></PinnedApp>
          <PinnedApp aria-label="Store"><StoreIcon /></PinnedApp>
          <PinnedApp aria-label="Chrome" $active><ChromeIcon /></PinnedApp>
        </Pinned>
        <Tray>
          <TrayIcon aria-label="Hidden icons" $space={18}>
            <svg width="12" height="8" viewBox="0 0 12 8" {...lineIcon} strokeWidth="1.300"><path d="M1 6.500l5-5 5 5" /></svg>
          </TrayIcon>
          <TrayIcon aria-label="OneDrive">
            <svg width="17" height="16" viewBox="0 0 17 16"><path d="M4 10a3.500 3.500 0 0 1-.5-6.500A5 5 0 0 1 12 3a4 4 0 0 1 3.500 6.500z" fill="#bdbdbd" stroke="#555" /><circle cx="11.500" cy="10.500" r="4.800" fill="#0078d4" /><path d="M11.500 8v1.300M11.500 10.200v3" stroke="#fff" strokeWidth="1.400" /></svg>
          </TrayIcon>
          <TrayIcon aria-label="Input status" $space={22}>
            <svg width="16" height="16" viewBox="0 0 16 16"><path d="M6 1h4l5.500 14H11z" fill="#fff" stroke="#b5b5b5" /><circle cx="4.500" cy="11" r="4.300" fill="#444" /><path d="M2.800 9.300l3.400 3.400M6.200 9.300l-3.400 3.400" stroke="#fff" strokeWidth="1.300" /></svg>
          </TrayIcon>
          <TrayIcon aria-label="Input mode" $space={22}>
            <svg width="16" height="16" viewBox="0 0 16 16"><path d="M.5.5h15v15H.5z" fill="#fff" stroke="#aaa" /><path d="M6 2h4l5 13h-5z" fill="#000" /><path d="M5 6l1.500 3.500L3.500 12z" fill="#000" /></svg>
          </TrayIcon>
          <TrayIcon aria-label="Network" $space={8}>
            <svg width="17" height="16" viewBox="0 0 17 16" {...lineIcon} strokeWidth="1.200"><path d="M10 1H2.500a1.500 1.500 0 0 0-1.500 1.500v8A1.500 1.500 0 0 0 2.500 12H11M7 12v3M4 15h8M14 6v9M12 1h4v3.500a2 2 0 0 1-4 0z" /></svg>
          </TrayIcon>
          <TrayIcon aria-label="Volume" $space={18}>
            <svg width="16" height="14" viewBox="0 0 16 14" {...lineIcon} strokeWidth="1.100"><path d="M1 5h2.500L7 1.500v11L3.500 9H1zM9 5q1 2 0 4M11 3.500q2 3.500 0 7M13 2q3 5 0 10" /></svg>
          </TrayIcon>
          <Clock>12:46<br />2025/12/24</Clock>
        </Tray>
      </Taskbar>
    </Screen>
  );
}
